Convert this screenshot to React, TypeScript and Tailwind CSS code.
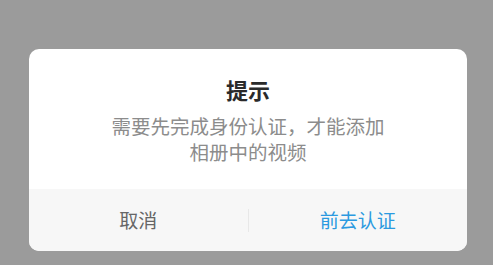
import React from 'react';

const App: React.FC = () => {
  return (
    <div
      className="w-full h-screen bg-[#9b9b9b] pt-[49px] overflow-hidden"
      style={{ fontFamily: '"Noto Sans CJK SC", "Noto Sans", sans-serif' }}
    >
      <div className="ml-[29px] w-[438px] h-[202px] bg-white rounded-[10px] overflow-hidden flex flex-col">
        {/* Contenido */}
        <div className="flex-1 flex flex-col items-center pt-[26px]">
          <h1 className="text-[22px] leading-[28px] font-semibold text-[#2a2a2a]">提示</h1>
          <p className="mt-[10px] text-[19.5px] leading-[26px] text-[#8c8c8c] text-center">
            需要先完成身份认证，才能添加
            <br />
            相册中的视频
          </p>
        </div>

        {/* Botones */}
        <div className="h-[62px] bg-[#f7f7f7] flex items-center">
          <button className="flex-1 h-full text-[19px] text-[#666666]">取消</button>
          <div className="w-px h-[23px] bg-[#e8e8e8]" />
          <button className="flex-1 h-full text-[19px] text-[#2b9ae0]">前去认证</button>
        </div>
      </div>
    </div>
  );
};

export default App;
